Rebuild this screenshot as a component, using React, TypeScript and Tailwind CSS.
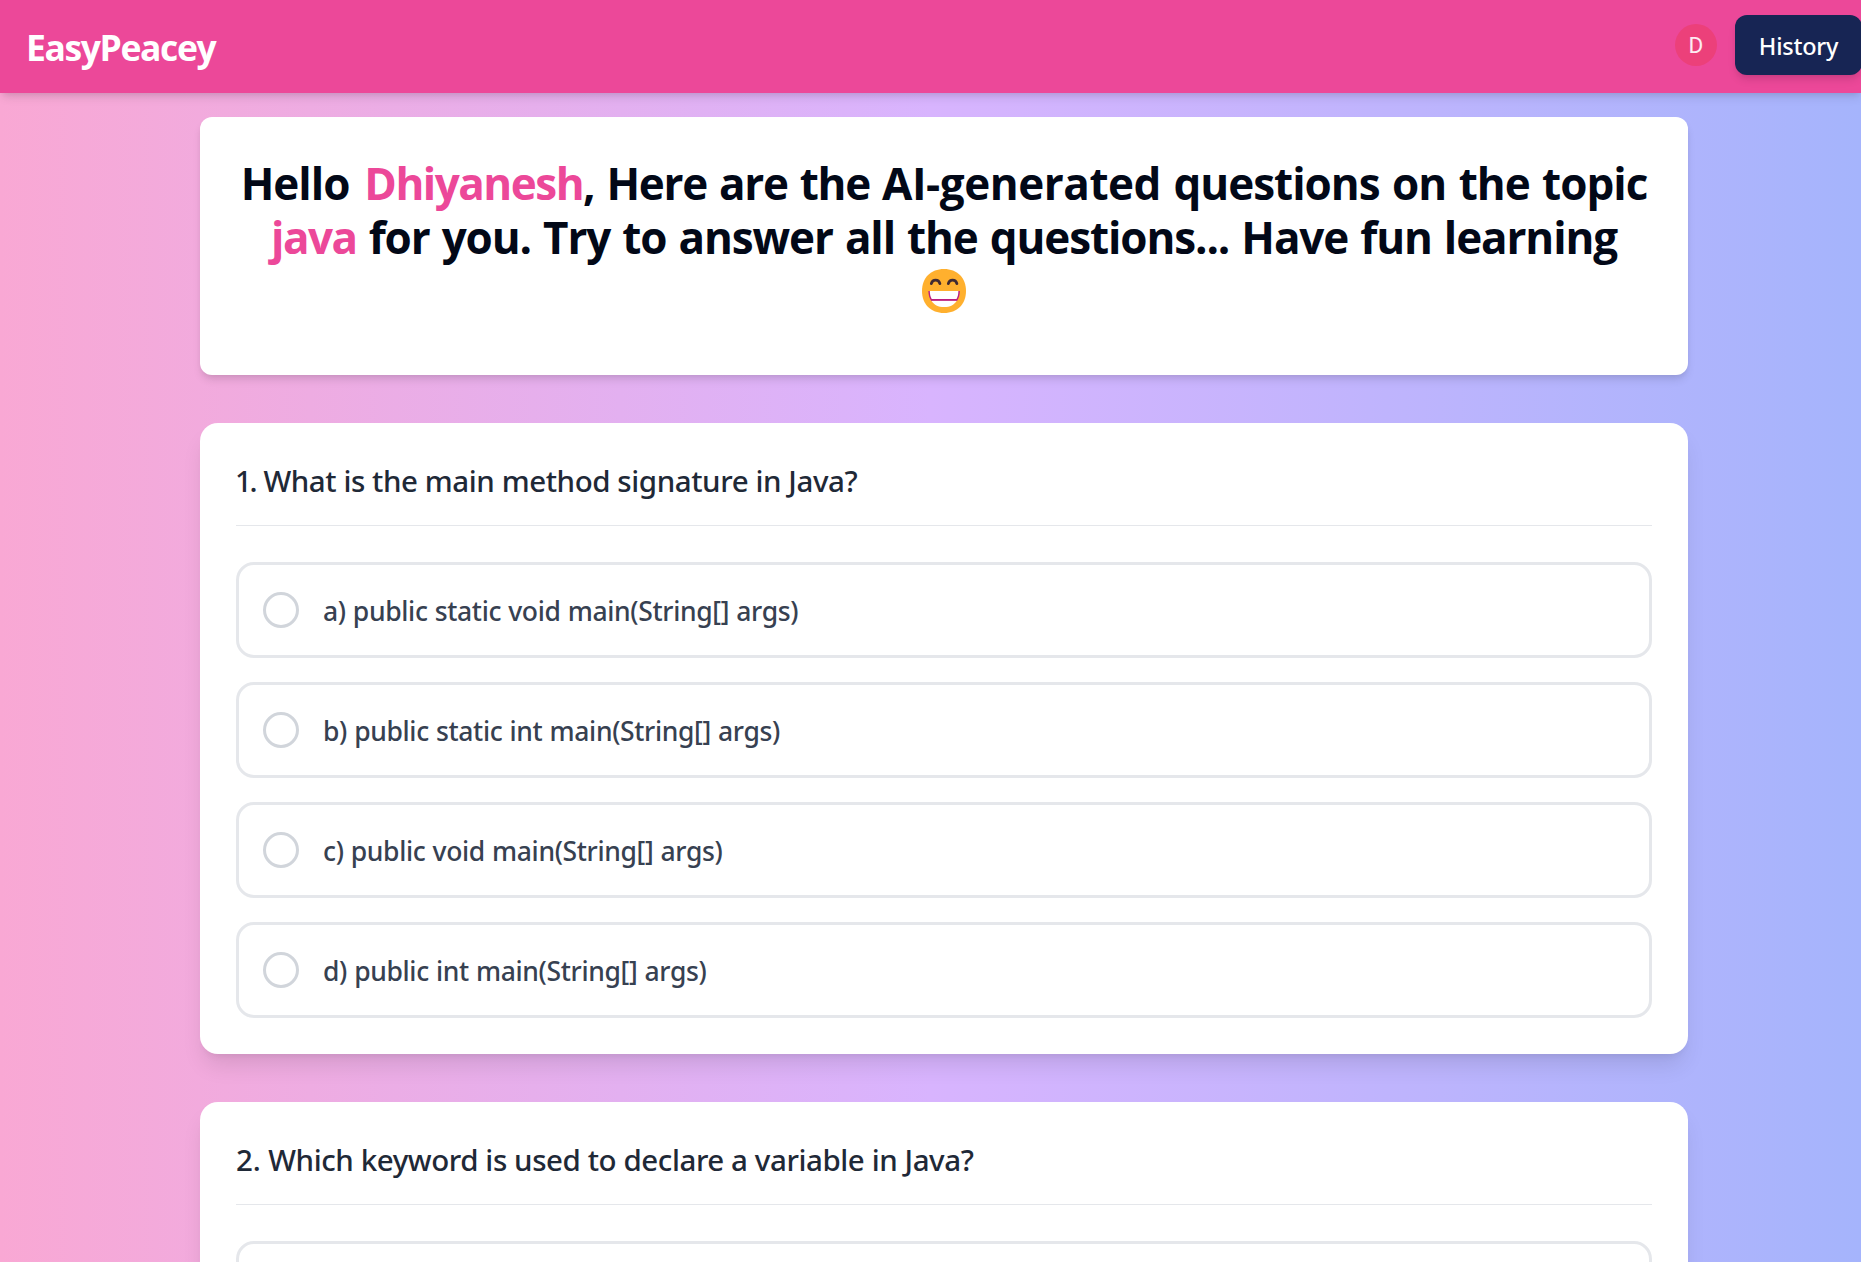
const questions = [
  {
    number: '1.',
    numberClass: 'ml-[-1px] tracking-[-2.4px] [word-spacing:3px]',
    title: 'What is the main method signature in Java?',
    options: [
      'a) public static void main(String[] args)',
      'b) public static int main(String[] args)',
      'c) public void main(String[] args)',
      'd) public int main(String[] args)',
    ],
  },
  {
    number: '2.',
    numberClass: 'tracking-[-0.1px]',
    title: 'Which keyword is used to declare a variable in Java?',
    options: ['a) var'],
  },
];

type Question = (typeof questions)[number];

function GrinEmoji() {
  return (
    <svg className="size-[44px]" viewBox="0 0 44 44" fill="none" role="img" aria-label="Grinning face">
      <path d="M22 44C35.200 44 44 35.200 44 22S35.200 0 22 0 0 8.800 0 22s8.800 22 22 22Z" fill="#FFB02E" />
      <path d="M9.300 14.600c.6-2 2.200-3.400 4.300-3.400s3.700 1.400 4.300 3.400M26.300 14.600c.6-2 2.200-3.400 4.300-3.400s3.700 1.400 4.300 3.400" stroke="#402A32" strokeWidth="2.800" strokeLinecap="round" />
      <path d="M6.400 22h31.400c0 4-1 7.300-2.800 9.800H9.200C7.400 29.300 6.400 26 6.400 22Z" fill="#BB1D80" />
      <path d="M7.800 22h28.600c0 3.200-.7 5.900-1.900 8H9.700c-1.200-2.100-1.900-4.800-1.900-8Z" fill="#fff" />
      <path d="M9.200 31.400h25.800C32.400 35.700 28 38 22.100 38S11.800 35.700 9.200 31.400Z" fill="#fff" />
      <path d="M9 31h26.200" stroke="#BB1D80" strokeWidth="1.500" />
    </svg>
  );
}

function Header() {
  return (
    <header className="relative z-10 flex h-[93px] w-[1862px] shrink-0 items-center justify-between bg-[#ec4899] pl-[26px] shadow-[0_6px_9px_-1.5px_rgba(0,0,0,0.1),0_3px_6px_-3px_rgba(0,0,0,0.1)]">
      <h1 className="pt-[2px] text-[35.5px] leading-none font-bold tracking-[-1.4px] text-white">EasyPeacey</h1>
      <div className="flex items-center gap-[18px] pb-[3px]">
        <div className="flex size-[42px] items-center justify-center rounded-full bg-[#ec407a] font-['Roboto',sans-serif] text-[22.5px] leading-none text-white/90">
          D
        </div>
        <button className="flex h-[60px] w-[127px] items-center justify-center rounded-[12px] bg-[#172554] pt-[3px] font-['Noto_Sans',sans-serif] text-[23.5px] leading-none font-medium tracking-[-0.25px] text-white shadow-[0_6px_9px_-1.5px_rgba(0,0,0,0.1),0_3px_6px_-3px_rgba(0,0,0,0.1)]">
          History
        </button>
      </div>
    </header>
  );
}

function QuestionCard({ number, numberClass, title, options }: Question) {
  return (
    <section className="rounded-[18px] bg-white p-[36px] font-['Noto_Sans',sans-serif] font-medium shadow-[0_15px_22.5px_-4.5px_rgba(0,0,0,0.1),0_6px_9px_-6px_rgba(0,0,0,0.1)]">
      <h3 className="h-[67px] border-b border-gray-200 pt-px text-[29.5px] leading-[42px] tracking-[-0.42px] whitespace-nowrap text-[#1f2937]">
        <span className={numberClass}>{number} </span>
        {title}
      </h3>
      <div className="mt-[36px] flex flex-col gap-[24px]">
        {options.map((option) => (
          <div key={option} className="flex h-[96px] items-center gap-[24px] rounded-[18px] border-3 border-[#e5e7eb] px-[24px]">
            <span className="size-[36px] shrink-0 rounded-full border-3 border-[#d1d5db]" />
            <span className="pt-[2px] text-[26.5px] leading-[40px] tracking-[-0.35px] whitespace-nowrap text-[#374151] [word-spacing:0.6px]">{option}</span>
          </div>
        ))}
      </div>
    </section>
  );
}

export default function App() {
  return (
    <div className="flex h-[1262px] w-[1861px] flex-col overflow-hidden bg-[linear-gradient(to_right,#f9a8d4,#d8b4fe,#a5b4fc)] font-['Open_Sans','Noto_Sans',sans-serif]">
      <Header />
      <main className="ml-[200px] flex w-[1488px] flex-col pt-[24px]">
        <section className="h-[258px] rounded-[12px] bg-white pt-[39px] shadow-[0_6px_9px_-1.5px_rgba(0,0,0,0.1),0_3px_6px_-3px_rgba(0,0,0,0.1)]">
          <h2 className="flex flex-col items-center text-[44px] leading-[54px] font-bold whitespace-nowrap text-[#020817]">
            <span className="tracking-[-1px] [word-spacing:2px]">
              Hello <span className="ml-[2.5px] tracking-[-1.5px] text-[#ec4899]">Dhiyanesh</span>
              <span className="tracking-[-1.3px]">, Here are the </span>
              <span className="tracking-[-0.45px]">AI-generated</span> questions on the topic
            </span>
            <span className="tracking-[-1.12px] [word-spacing:1.8px]">
              <span className="tracking-[-1.5px] text-[#ec4899]">java</span> for you. Try to answer all the questions... Have fun learning
            </span>
            <span className="flex h-[54px] items-center">
              <GrinEmoji />
            </span>
          </h2>
        </section>
        <div className="mt-[48px] flex flex-col gap-[48px]">
          {questions.map((question) => (
            <QuestionCard key={question.number} {...question} />
          ))}
        </div>
      </main>
    </div>
  );
}
